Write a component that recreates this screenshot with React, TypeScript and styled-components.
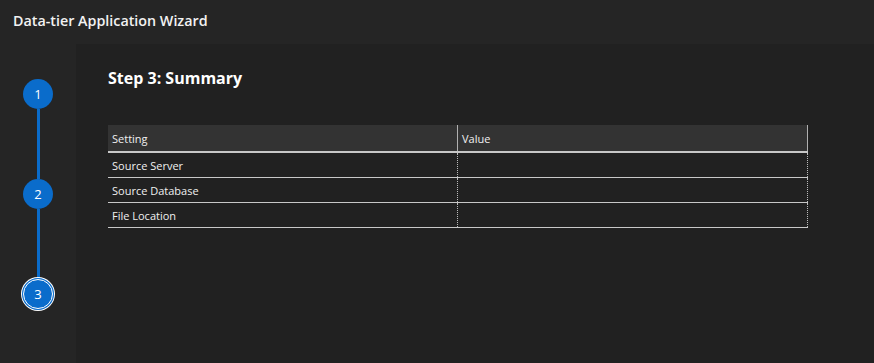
import styled, { createGlobalStyle } from "styled-components";

const Global = createGlobalStyle`
  html, body {
    margin: 0;
    padding: 0;
    background: #212121;
  }
  body {
    font-family: "Open Sans", "Noto Sans", sans-serif;
    color: #ffffff;
  }
`;

const Page = styled.div`
  width: 874px;
  height: 363px;
  display: flex;
  flex-direction: column;
  background: #212121;
  overflow: hidden;
`;

const Header = styled.header`
  height: 44px;
  flex-shrink: 0;
  background: #252525;
  display: flex;
  align-items: center;
  padding-left: 13px;
  padding-bottom: 4px;
  box-sizing: border-box;
  font-size: 14.3px;
  font-weight: 600;
  color: #f2f2f2;
`;

const Body = styled.div`
  flex: 1;
  display: flex;
`;

const Sidebar = styled.aside`
  width: 76px;
  flex-shrink: 0;
  background: #252525;
  display: flex;
  flex-direction: column;
  align-items: center;
  padding-top: 35px;
  box-sizing: border-box;
`;

const Connector = styled.div`
  width: 3px;
  height: 70px;
  background: #0a6ccb;
`;

const Step = styled.div<{ $current?: boolean }>`
  width: 30px;
  height: 30px;
  border-radius: 50%;
  background: #0a6ccb;
  display: flex;
  align-items: center;
  justify-content: center;
  font-size: 13px;
  color: #ffffff;
  box-sizing: border-box;
  ${(p) =>
    p.$current &&
    `
    border: 1px solid #ffffff;
    box-shadow: 0 0 0 1px #0a6ccb, 0 0 0 2px #ffffff;
  `}
`;

const Main = styled.main`
  flex: 1;
  padding: 22px 0 0 32px;
`;

const Title = styled.h2`
  margin: 0 0 35px;
  font-size: 16px;
  font-weight: 700;
  line-height: 24px;
  color: #ffffff;
`;

const Table = styled.table`
  width: 700px;
  border-collapse: collapse;
  font-size: 11px;
  color: #f0f0f0;
`;

const Th = styled.th<{ $last?: boolean }>`
  height: 26px;
  padding: 0 0 0 4px;
  text-align: left;
  font-weight: 400;
  background: #333333;
  border-bottom: 2px solid #c8c8c8;
  border-right: 1px solid #b0b0b0;
  ${(p) => !p.$last && "width: 345px;"}
`;

const Td = styled.td`
  height: 24px;
  padding: 0 0 0 4px;
  border-bottom: 1px solid #c8c8c8;
  border-right: 1px dotted #bdbdbd;
`;

const rows = ["Source Server", "Source Database", "File Location"];

export default function App() {
  return (
    <>
      <Global />
      <Page>
        <Header>Data-tier Application Wizard</Header>
        <Body>
          <Sidebar>
            <Step>1</Step>
            <Connector />
            <Step>2</Step>
            <Connector />
            <Step $current>3</Step>
          </Sidebar>
          <Main>
            <Title>Step 3: Summary</Title>
            <Table>
              <thead>
                <tr>
                  <Th>Setting</Th>
                  <Th $last>Value</Th>
                </tr>
              </thead>
              <tbody>
                {rows.map((r) => (
                  <tr key={r}>
                    <Td>{r}</Td>
                    <Td />
                  </tr>
                ))}
              </tbody>
            </Table>
          </Main>
        </Body>
      </Page>
    </>
  );
}
